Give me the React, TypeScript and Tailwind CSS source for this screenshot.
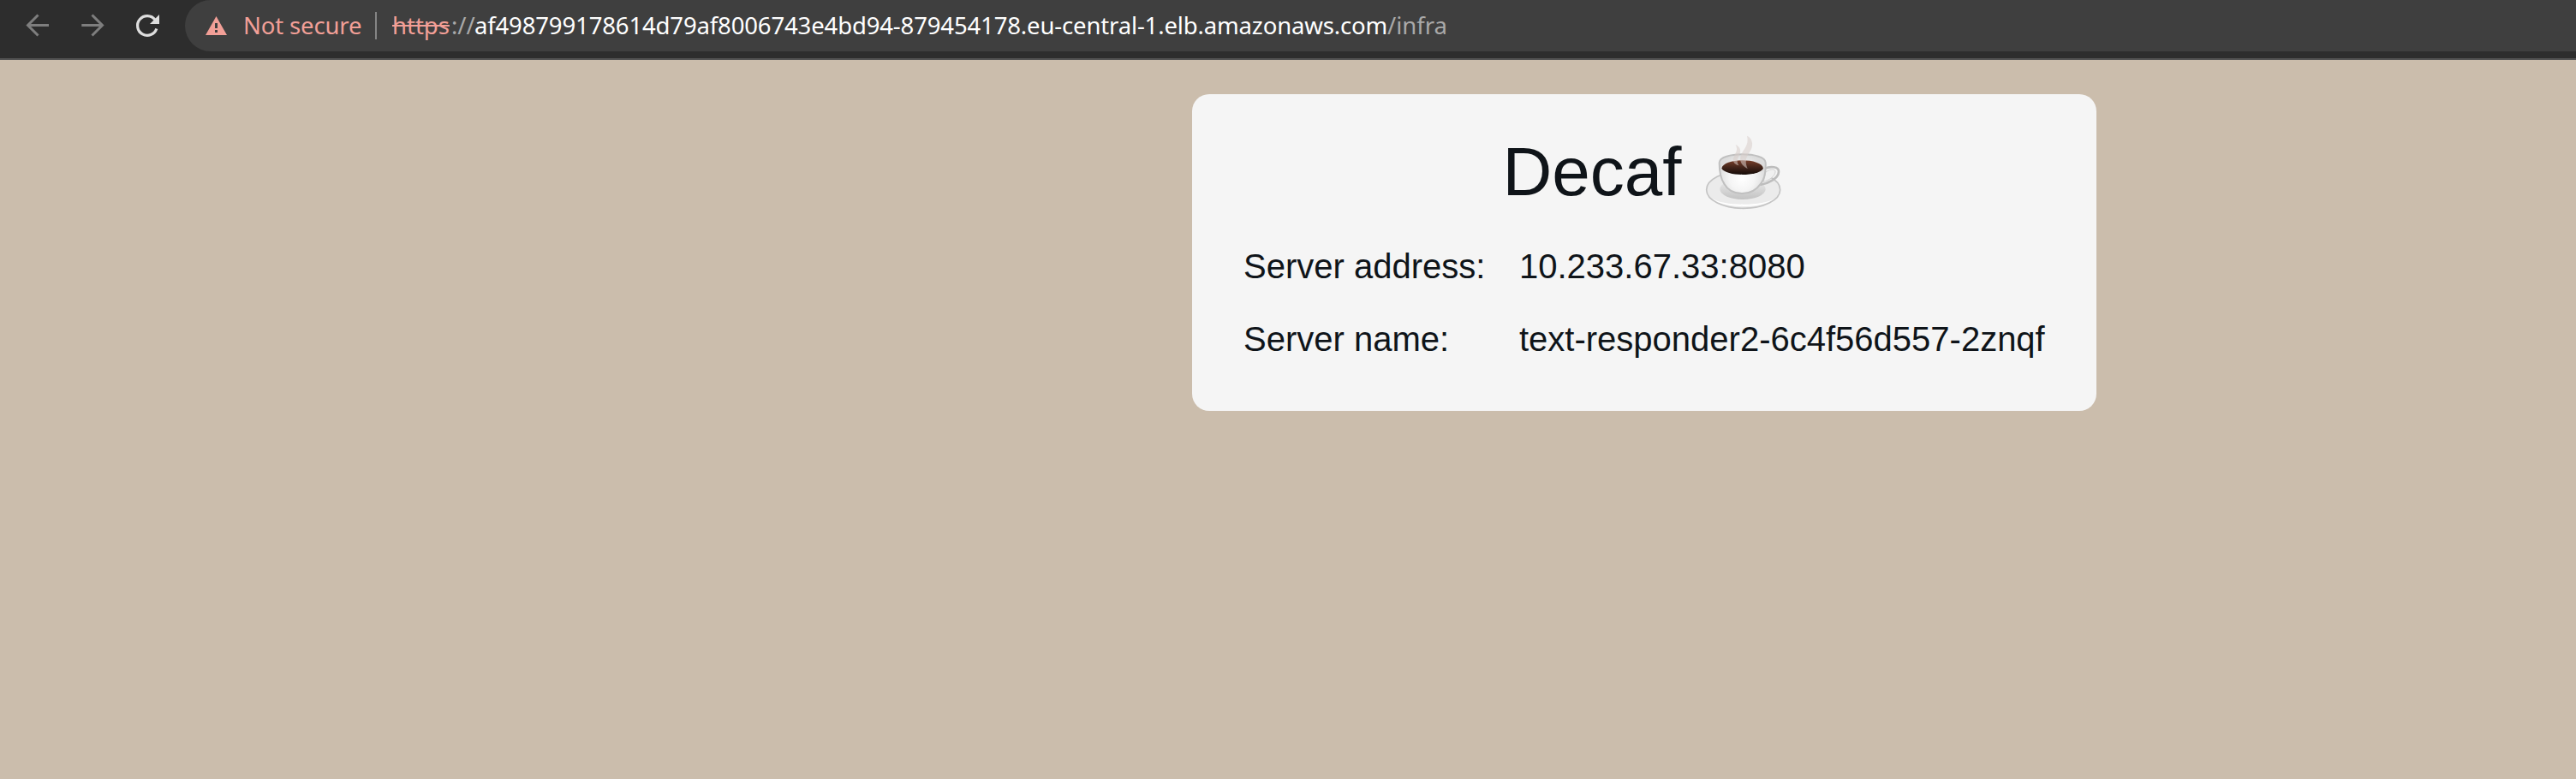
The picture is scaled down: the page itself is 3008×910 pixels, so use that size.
import React from "react";

function Coffee() {
  return (
    <svg className="ml-[27px] mr-[3px] h-[92px] w-[92px] shrink-0" viewBox="60 30 276 276" fill="none">
      <defs>
        <linearGradient id="brew" x1="0" y1="126" x2="0" y2="178" gradientUnits="userSpaceOnUse">
          <stop offset="0" stopColor="#7a3f2a" />
          <stop offset="0.5" stopColor="#42241a" />
          <stop offset="1" stopColor="#140b08" />
        </linearGradient>
        <radialGradient id="cup" cx="192" cy="190" r="85" gradientUnits="userSpaceOnUse">
          <stop offset="0" stopColor="#ffffff" />
          <stop offset="0.5" stopColor="#f5f5f5" />
          <stop offset="1" stopColor="#dcdcdc" />
        </radialGradient>
        <linearGradient id="shade" x1="0" y1="200" x2="0" y2="264" gradientUnits="userSpaceOnUse">
          <stop offset="0" stopColor="#e8e8e8" />
          <stop offset="1" stopColor="#c2c2c2" />
        </linearGradient>
      </defs>
      <ellipse cx="197" cy="230" rx="129" ry="65" fill="#ebebeb" stroke="#c4c4c4" strokeWidth="5" />
      <path d="M88 260C125 297 268 297 306 260C270 288 125 288 88 260Z" fill="#fff" />
      <ellipse cx="195" cy="228" rx="80" ry="36" fill="url(#shade)" />
      <path d="M272 155C292 147 322 148 321 167C320 191 285 208 256 213" stroke="#bdbdbd" strokeWidth="8" />
      <path d="M275 169C290 155 311 156 309 168C307 183 289 196 268 202Z" fill="#f0f0f0" stroke="#d2d2d2" strokeWidth="3" />
      <path d="M113 135C113 96 275 96 275 135C276 160 274 190 258 209C242 232 223 243 194 243C164 243 143 232 130 209C116 188 113 160 113 135Z" fill="url(#cup)" stroke="#c0c0c0" strokeWidth="6" />
      <path d="M121 155C127 117 261 117 267 155C251 184 137 184 121 155Z" fill="url(#brew)" />
      <g fill="#d7ccc8" fillOpacity="0.55">
        <path d="M210 41C230 50 233 75 222 93C210 112 199 128 212 156C193 147 182 132 188 112C194 90 219 76 210 41Z" />
        <path d="M170 72C187 80 190 95 183 108C175 122 173 134 182 145C163 142 157 128 165 112C172 98 179 90 170 72Z" />
      </g>
    </svg>
  );
}

function Toolbar() {
  return (
    <header className="flex h-[70px] items-start border-b-2 border-[#525252] bg-[#2d2d2d] font-['Noto_Sans','Open_Sans',sans-serif] text-[27.5px] leading-[60px]">
      <svg className="ml-[28px] mt-[14px] h-8 w-8" viewBox="0 0 32 32" fill="none" stroke="#7e7e7e" strokeWidth="3">
        <path d="M29 15.500H5M16.500 3.500L4.500 15.500L16.500 27.500" />
      </svg>
      <svg className="ml-8 mt-[14px] h-8 w-8" viewBox="0 0 32 32" fill="none" stroke="#7e7e7e" strokeWidth="3">
        <path d="M3.300 15.500H27M15.500 3.500L27.500 15.500L15.500 27.500" />
      </svg>
      <svg className="ml-8 mt-[14px] h-8 w-8" viewBox="0 0 32 32" fill="none">
        <path d="M26.800 19.500A11.400 11.400 0 1 1 25 9" stroke="#dedede" strokeWidth="3.200" />
        <path d="M30 3V14H19Z" fill="#dedede" />
      </svg>
      <div className="ml-7 flex h-[60px] flex-1 items-center rounded-l-[30px] bg-[#3f3f3f] pl-6">
        <svg className="h-[22px] w-[25px]" viewBox="0 0 25 22">
          <path fill="#f29f97" fillRule="evenodd" d="M12.500 0L25 22H0ZM11 8V14H14V8ZM11 16V19H14V16Z" />
        </svg>
        <span className="ml-[19px] w-[154px] whitespace-nowrap tracking-[-0.15px] text-[#f29f97]">Not secure</span>
        <span className="h-8 w-[2px] bg-[#858585]" />
        <span className="ml-[18px] flex whitespace-nowrap text-[#a9a9a9]">
          <span className="mr-[2px] text-[#f29f97] line-through decoration-2">https</span>
          <span className="w-[27px]">://</span>
          <span className="w-[1066px] tracking-[-0.145px] text-white">af498799178614d79af8006743e4bd94-879454178.eu-central-1.elb.amazonaws.com</span>
          <span>/infra</span>
        </span>
      </div>
    </header>
  );
}

export default function App() {
  return (
    <div className="h-[910px] w-[3008px] overflow-hidden bg-[#cbbdac]">
      <Toolbar />
      <main className="ml-[1392px] mt-10 h-[370px] w-[1056px] rounded-[20px] bg-[#f5f5f5] px-[60px] pt-[45px] font-['Liberation_Sans',sans-serif] text-[40px] leading-[46px] text-[#0f1419]">
        <h1 className="flex h-[92px] justify-center text-[80px] leading-[92px]">
          Decaf
          <Coffee />
        </h1>
        <dl className="mt-[41px] grid grid-cols-[322px_1fr] gap-y-[39px] whitespace-nowrap">
          <dt>Server address:</dt>
          <dd>10.233.67.33:8080</dd>
          <dt>Server name:</dt>
          <dd>text-responder2-6c4f56d557-2znqf</dd>
        </dl>
      </main>
    </div>
  );
}
